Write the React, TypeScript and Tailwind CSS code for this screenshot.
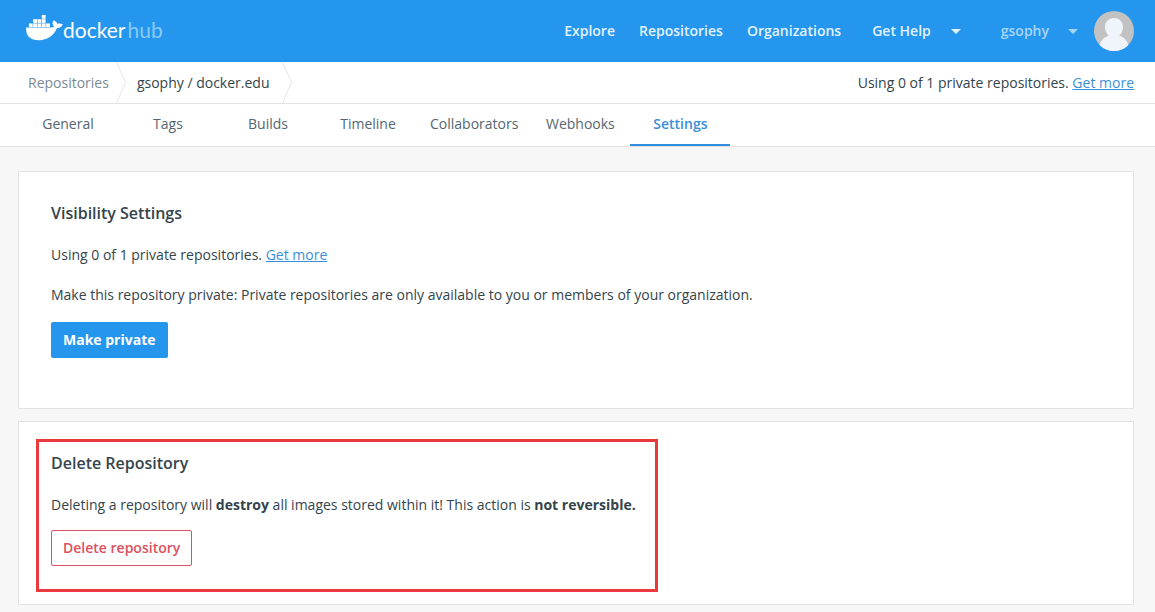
import type { ReactNode } from "react";

const NAV_LINKS = ["Explore", "Repositories", "Organizations"];

const TABS = ["General", "Tags", "Builds", "Timeline", "Collaborators", "Webhooks", "Settings"];
const ACTIVE_TAB = "Settings";

function WhaleIcon() {
  return (
    <svg width="37" height="26" viewBox="0 0 37 26" fill="currentColor" aria-hidden="true">
      <rect x="15.8" y="0" width="3.8" height="3.7" />
      <rect x="7.2" y="4.2" width="3.8" height="3.7" />
      <rect x="11.5" y="4.2" width="3.8" height="3.7" />
      <rect x="15.8" y="4.2" width="3.8" height="3.7" />
      <rect x="2.9" y="8.4" width="3.8" height="3.7" />
      <rect x="7.2" y="8.4" width="3.8" height="3.7" />
      <rect x="11.5" y="8.4" width="3.8" height="3.7" />
      <rect x="15.8" y="8.4" width="3.8" height="3.7" />
      <rect x="20.1" y="8.4" width="3.8" height="3.7" />
      <path d="M0.2 12.6H24.4C26 12.6 27.3 12.2 28.2 11.6C26.3 9.8 26 7.2 27.6 5.2C29.8 6.3 31 7.5 31.4 8.7C33 8.2 35 8.3 36.8 9.2C35.8 11.8 33.6 13.1 30.8 13.3C27.8 20.8 21.6 25.2 12.8 25.2C3.8 25.2 -0.5 20.4 0.2 12.6Z" />
    </svg>
  );
}

function Caret() {
  return (
    <svg width="10" height="5" viewBox="0 0 10 5" fill="currentColor" aria-hidden="true">
      <path d="M0 0H10L5 5Z" />
    </svg>
  );
}

function Avatar() {
  return (
    <svg width="40" height="40" viewBox="0 0 40 40" className="rounded-full" aria-hidden="true">
      <rect width="40" height="40" fill="#c2c2c2" />
      <path
        d="M20 7C25.4 7 29 11 29 16.2C29 19.8 27.6 22.7 25.2 24.4C30 26 33.6 30 34.8 35V40H5.2V35C6.4 30 10 26 14.8 24.4C12.4 22.7 11 19.8 11 16.2C11 11 14.6 7 20 7Z"
        fill="#f0f5fb"
      />
    </svg>
  );
}

function CrumbDivider() {
  return (
    <svg width="11" height="41" viewBox="0 0 11 41" fill="none" stroke="#e3e6e8" aria-hidden="true">
      <path d="M0.5 0L9.5 20.5L0.5 41" />
    </svg>
  );
}

function PlanUsage() {
  return (
    <p>
      Using 0 of 1 private repositories.{" "}
      <a href="#billing" className="text-[#3b8fd6] underline">
        Get more
      </a>
    </p>
  );
}

function Card({ className, children }: { className: string; children: ReactNode }) {
  return <section className={`border border-[#e1e2e3] bg-white ${className}`}>{children}</section>;
}

export default function App() {
  return (
    <div className="min-h-screen bg-[#f7f7f7] pb-2 font-['Open_Sans',sans-serif] text-sm leading-5 text-[#33444c]">
      {/* Top bar */}
      <header className="flex h-[62px] items-center bg-[#2496ed] pr-[21px] pl-[26px] font-semibold text-[#e2f2fd]">
        <a href="#home" className="flex items-center pb-1.5 text-white">
          <WhaleIcon />
          <span className="flex gap-0.5 pt-1 font-[Lato,sans-serif] text-[21px] leading-6 font-normal">
            <span>docker</span>
            <span className="text-[#8bc9f6]">hub</span>
          </span>
        </a>
        <nav className="ml-auto flex items-center gap-6">
          {NAV_LINKS.map((link) => (
            <a key={link} href={`#${link.toLowerCase()}`}>
              {link}
            </a>
          ))}
          <button type="button" className="ml-[7px] flex items-center gap-5">
            Get Help
            <Caret />
          </button>
        </nav>
        <button type="button" className="ml-10 flex items-center gap-[19px] text-[#a7d5f8]">
          gsophy
          <Caret />
        </button>
        <a href="#account" aria-label="Account" className="ml-4">
          <Avatar />
        </a>
      </header>

      {/* Breadcrumb */}
      <div className="flex h-[42px] items-center justify-between border-b border-[#e1e2e3] bg-white pr-[21px] pl-7">
        <nav className="flex items-center">
          <a href="#repositories" className="mr-[7px] text-[#7d8a94]">
            Repositories
          </a>
          <CrumbDivider />
          <span className="mr-3 ml-[10px]">gsophy / docker.edu</span>
          <CrumbDivider />
        </nav>
        <PlanUsage />
      </div>

      {/* Tabs */}
      <nav className="flex h-[43px] border-b border-[#e1e2e3] bg-white pl-[18px]">
        {TABS.map((tab) => (
          <a
            key={tab}
            href={`#${tab.toLowerCase()}`}
            className={`min-w-[100px] px-3 pt-[10px] text-center ${
              tab === ACTIVE_TAB ? "border-b-2 border-[#2f8fdc] font-semibold text-[#3b8fd6]" : "text-[#556670]"
            }`}
          >
            {tab}
          </a>
        ))}
      </nav>

      <main className="mt-6 mr-[21px] ml-[18px] space-y-3">
        <Card className="px-8 pt-[31px] pb-[50px]">
          <h2 className="text-base leading-5 font-semibold">Visibility Settings</h2>
          <div className="mt-[22px] mb-5">
            <PlanUsage />
          </div>
          <p>
            Make this repository private: Private repositories are only available to you or members of your
            organization.
          </p>
          <button type="button" className="mt-[17px] h-9 rounded-xs bg-[#2496ed] px-3 font-bold text-white">
            Make private
          </button>
        </Card>

        <Card className="px-[17px] pt-[17px] pb-3">
          <div className="w-fit border-3 border-[#e93b3e] pt-[11px] pr-[19px] pb-[23px] pl-3">
            <h2 className="text-base leading-5 font-semibold">Delete Repository</h2>
            <p className="mt-[22px]">
              Deleting a repository will <strong>destroy</strong> all images stored within it! This action is{" "}
              <strong>not reversible.</strong>
            </p>
            <button
              type="button"
              className="mt-[15px] h-9 rounded-xs border border-[#dc5060] px-[11px] font-semibold text-[#dc5060]"
            >
              Delete repository
            </button>
          </div>
        </Card>
      </main>
    </div>
  );
}
